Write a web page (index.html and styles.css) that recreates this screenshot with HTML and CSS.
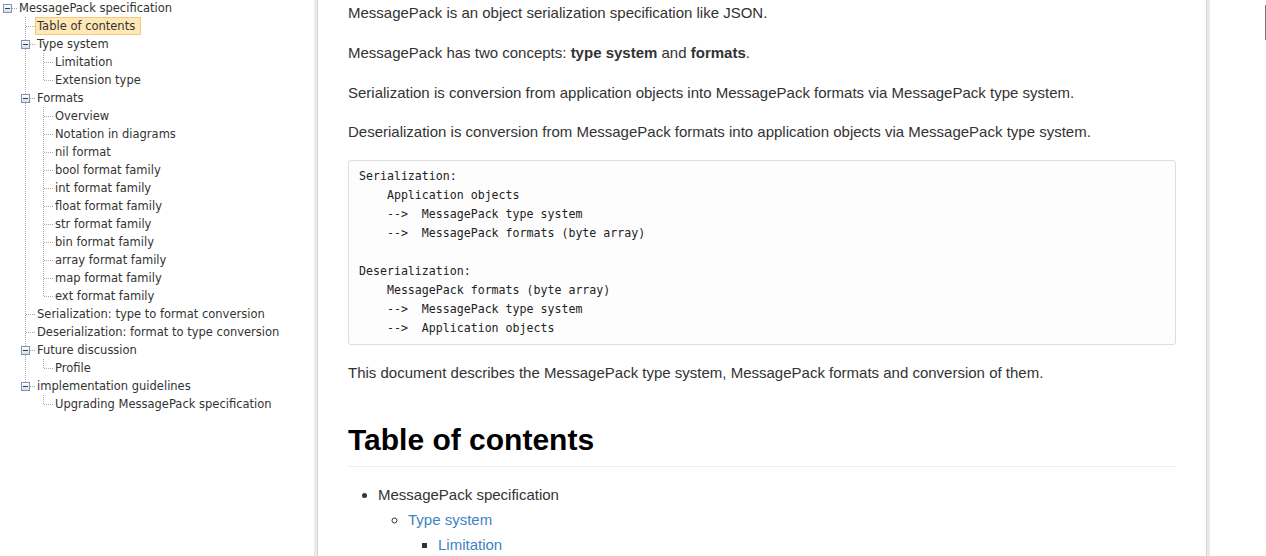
FILE: index.html
```html
<!DOCTYPE html>
<html lang="en">
<head>
<meta charset="utf-8">
<title>MessagePack specification</title>
<link rel="stylesheet" href="styles.css">
</head>
<body>
<div class="page">
  <nav class="sidebar">
    <ul class="tree">
      <li>
        <div class="node"><span class="sw root open"></span><a class="label">MessagePack specification</a></div>
        <ul class="sub">
          <li><div class="node"><span class="sw center"></span><a class="label sel">Table of contents</a></div></li>
          <li>
            <div class="node"><span class="sw center open"></span><a class="label">Type system</a></div>
            <ul class="sub line">
              <li><div class="node"><span class="sw center"></span><a class="label">Limitation</a></div></li>
              <li><div class="node"><span class="sw bottom"></span><a class="label">Extension type</a></div></li>
            </ul>
          </li>
          <li>
            <div class="node"><span class="sw center open"></span><a class="label">Formats</a></div>
            <ul class="sub line">
              <li><div class="node"><span class="sw center"></span><a class="label">Overview</a></div></li>
              <li><div class="node"><span class="sw center"></span><a class="label">Notation in diagrams</a></div></li>
              <li><div class="node"><span class="sw center"></span><a class="label">nil format</a></div></li>
              <li><div class="node"><span class="sw center"></span><a class="label">bool format family</a></div></li>
              <li><div class="node"><span class="sw center"></span><a class="label">int format family</a></div></li>
              <li><div class="node"><span class="sw center"></span><a class="label">float format family</a></div></li>
              <li><div class="node"><span class="sw center"></span><a class="label">str format family</a></div></li>
              <li><div class="node"><span class="sw center"></span><a class="label">bin format family</a></div></li>
              <li><div class="node"><span class="sw center"></span><a class="label">array format family</a></div></li>
              <li><div class="node"><span class="sw center"></span><a class="label">map format family</a></div></li>
              <li><div class="node"><span class="sw bottom"></span><a class="label">ext format family</a></div></li>
            </ul>
          </li>
          <li><div class="node"><span class="sw center"></span><a class="label">Serialization: type to format conversion</a></div></li>
          <li><div class="node"><span class="sw center"></span><a class="label">Deserialization: format to type conversion</a></div></li>
          <li>
            <div class="node"><span class="sw center open"></span><a class="label">Future discussion</a></div>
            <ul class="sub line">
              <li><div class="node"><span class="sw bottom"></span><a class="label">Profile</a></div></li>
            </ul>
          </li>
          <li>
            <div class="node"><span class="sw bottom open"></span><a class="label">implementation guidelines</a></div>
            <ul class="sub">
              <li><div class="node"><span class="sw bottom"></span><a class="label">Upgrading MessagePack specification</a></div></li>
            </ul>
          </li>
        </ul>
      </li>
    </ul>
  </nav>

  <main class="main">
    <p>MessagePack is an object serialization specification like JSON.</p>
    <p>MessagePack has two concepts: <strong>type system</strong> and <strong>formats</strong>.</p>
    <p>Serialization is conversion from application objects into MessagePack formats via MessagePack type system.</p>
    <p>Deserialization is conversion from MessagePack formats into application objects via MessagePack type system.</p>
<pre class="code">Serialization:
    Application objects
    --&gt;  MessagePack type system
    --&gt;  MessagePack formats (byte array)

Deserialization:
    MessagePack formats (byte array)
    --&gt;  MessagePack type system
    --&gt;  Application objects</pre>
    <p>This document describes the MessagePack type system, MessagePack formats and conversion of them.</p>
    <h1 class="heading">Table of contents</h1>
    <ul class="toc">
      <li>MessagePack specification
        <ul>
          <li><a href="#type-system">Type system</a>
            <ul>
              <li><a href="#limitation">Limitation</a></li>
            </ul>
          </li>
        </ul>
      </li>
    </ul>
  </main>
  <div class="aside"></div>
</div>
<div class="thumb"></div>
</body>
</html>
```

FILE: styles.css
```css
html, body {
  margin: 0;
  height: 100%;
  overflow: hidden;
  background: #fff;
}

.page {
  display: flex;
  height: 100%;
}

/* ---------- sidebar tree ---------- */
.sidebar {
  width: 317px;
  flex: none;
  overflow: hidden;
  font-family: "DejaVu Sans", Verdana, sans-serif;
  font-size: 11.5px;
  color: #333;
}

.tree,
.tree ul {
  list-style: none;
  margin: 0;
  padding: 0;
}

.tree {
  margin-top: -1px;
}

.tree .sub {
  padding-left: 18px;
}

.tree .sub.line {
  background: repeating-linear-gradient(to bottom, #a9a9a9 0 1px, transparent 1px 2px) 7px 0 / 1px 100% no-repeat;
}

.node {
  display: flex;
  align-items: center;
  height: 18px;
  white-space: nowrap;
}

.sw {
  position: relative;
  flex: none;
  width: 17px;
  height: 18px;
  background-repeat: no-repeat;
}

.sw.root {
  background-image: repeating-linear-gradient(to right, #a9a9a9 0 1px, transparent 1px 2px);
  background-position: 12px 9px;
  background-size: 5px 1px;
}

.sw.center {
  background-image:
    repeating-linear-gradient(to bottom, #a9a9a9 0 1px, transparent 1px 2px),
    repeating-linear-gradient(to right, #a9a9a9 0 1px, transparent 1px 2px);
  background-position: 7px 0, 8px 9px;
  background-size: 1px 18px, 9px 1px;
  background-repeat: no-repeat;
}

.sw.bottom {
  background-image:
    repeating-linear-gradient(to bottom, #a9a9a9 0 1px, transparent 1px 2px),
    repeating-linear-gradient(to right, #a9a9a9 0 1px, transparent 1px 2px);
  background-position: 7px 0, 8px 9px;
  background-size: 1px 9px, 9px 1px;
  background-repeat: no-repeat;
}

.sw.open::before {
  content: "";
  position: absolute;
  left: 3px;
  top: 5px;
  width: 7px;
  height: 7px;
  border: 1px solid #8094b3;
  background: linear-gradient(#ffffff, #d9dee9);
}

.sw.open::after {
  content: "";
  position: absolute;
  left: 5px;
  top: 9px;
  width: 5px;
  height: 1px;
  background: #283c64;
}

.label {
  display: block;
  height: 16px;
  line-height: 16px;
  padding: 0 5px 0 1px;
  border: 1px solid transparent;
  color: #333;
  cursor: pointer;
}

.label.sel {
  background: #ffe8b6;
  border-color: #f6c97c;
}

/* ---------- main document ---------- */
.main {
  flex: none;
  box-sizing: border-box;
  width: 890px;
  height: 100%;
  overflow: hidden;
  padding: 1px 30px 0;
  border-left: 1px solid #d5d5d5;
  border-right: 1px solid #d5d5d5;
  box-shadow: -3px 0 0 #ebebeb, 3px 0 0 #ebebeb;
  font-family: "Liberation Sans", Arial, Helvetica, sans-serif;
  font-size: 15px;
  line-height: 1.65;
  color: #333;
}

.main p {
  margin: 0 0 15px;
}

.main strong {
  font-weight: bold;
}

.code {
  margin: 0 0 16px;
  padding: 6px 10px;
  background: #fdfdfd;
  border: 1px solid #dddddd;
  border-radius: 3px;
  font-family: "DejaVu Sans Mono", "Liberation Mono", monospace;
  font-size: 11.6px;
  line-height: 19px;
  color: #222;
}

.heading {
  margin: 36px 0 15px;
  padding-bottom: 8px;
  border-bottom: 1px solid #eeeeee;
  font-size: 30px;
  line-height: 36px;
  font-weight: bold;
  color: #000;
}

.toc,
.toc ul {
  margin: 0;
  padding-left: 30px;
}

.toc li {
  line-height: 25px;
}

.toc {
  list-style: disc;
}

.toc ul {
  list-style: circle;
}

.toc ul ul {
  list-style: square;
}

.toc a {
  color: #4183c4;
  text-decoration: none;
}

.aside {
  flex: 1;
}

.thumb {
  position: absolute;
  top: 5px;
  right: 0;
  width: 1px;
  height: 35px;
  background: #777;
}
```
